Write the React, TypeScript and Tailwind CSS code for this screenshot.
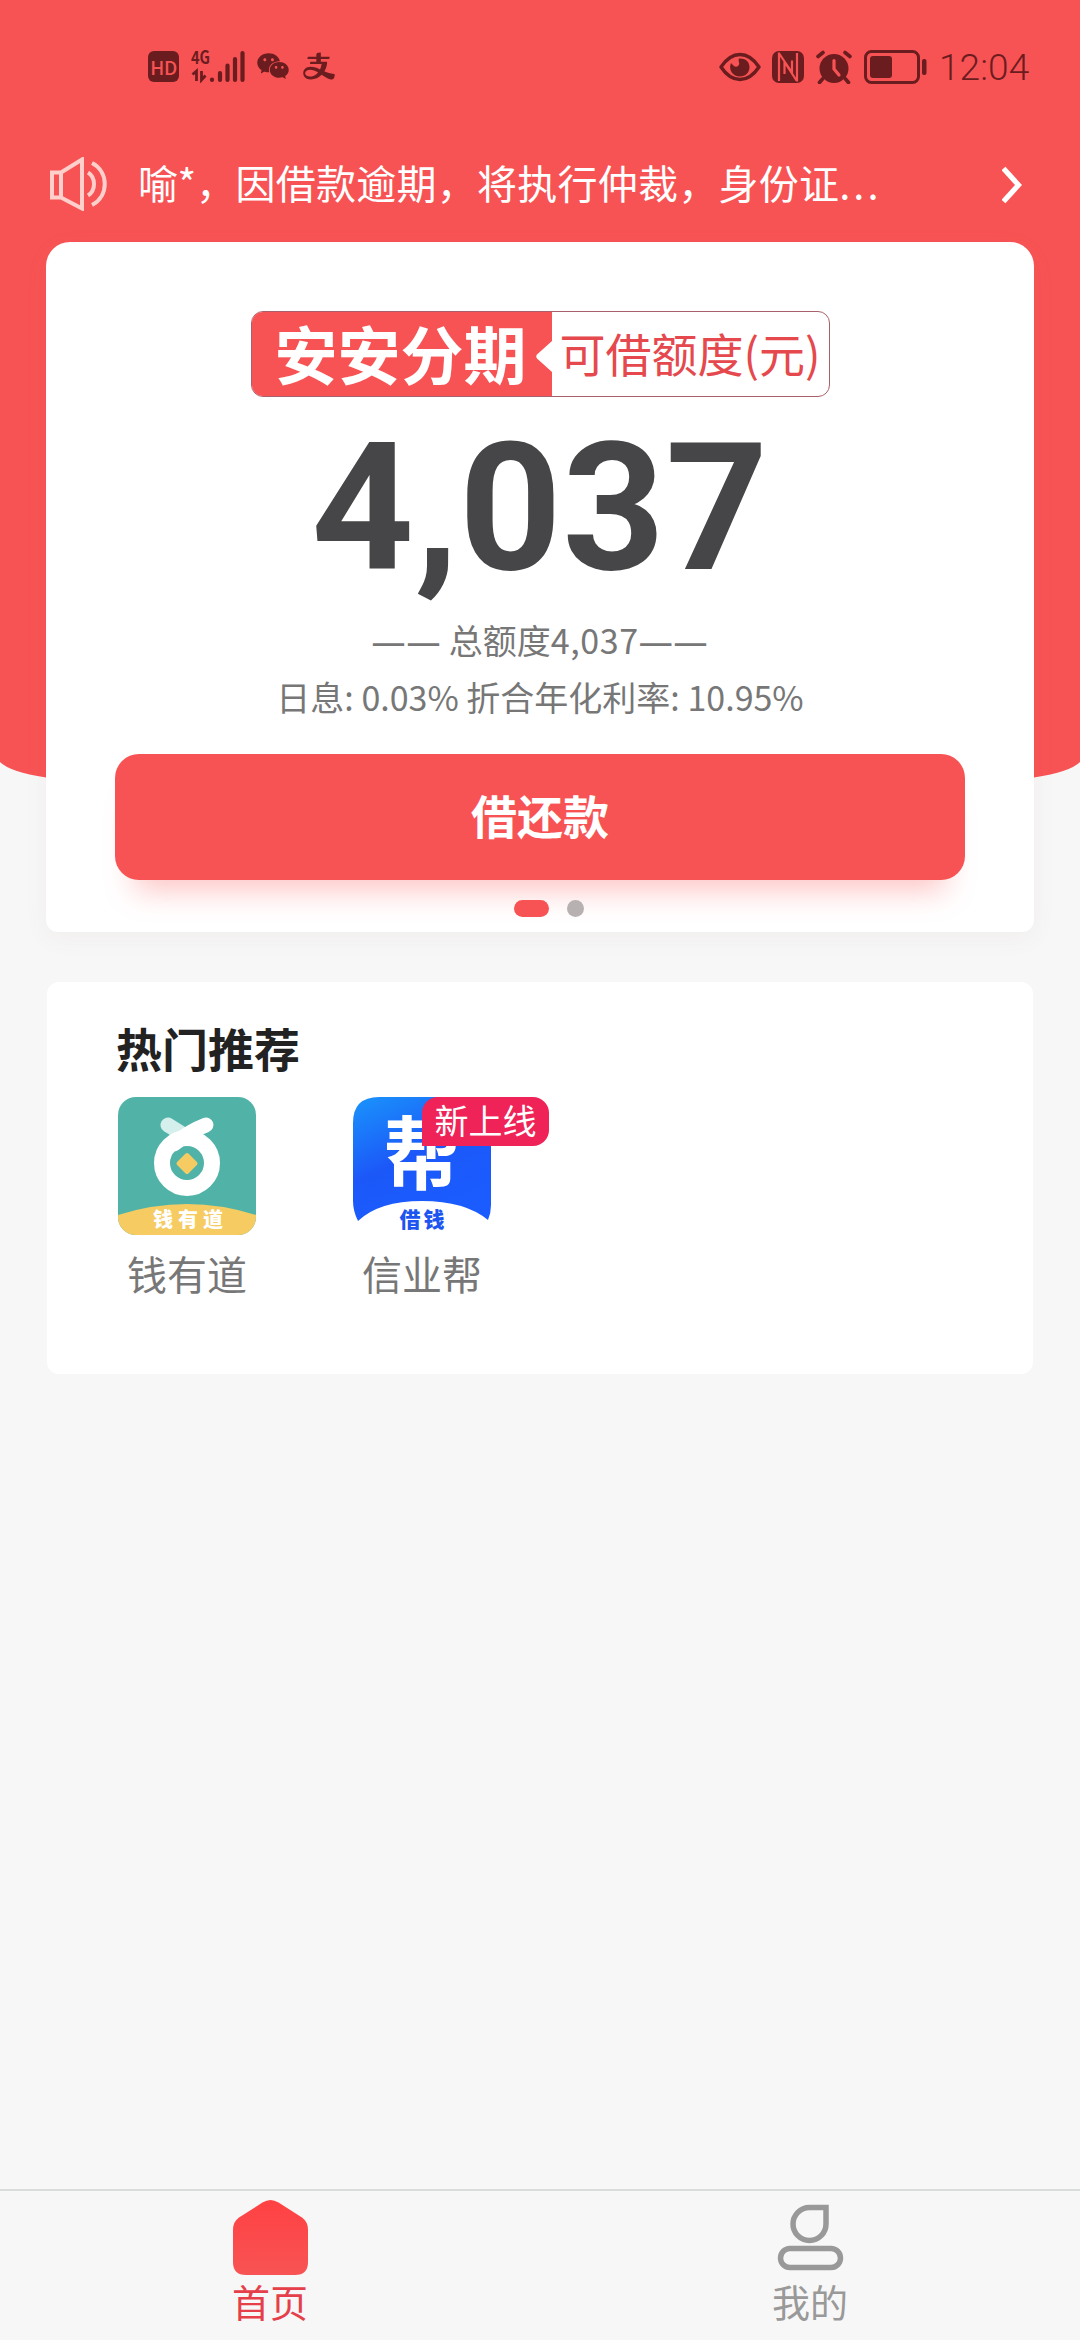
import { AiOutlineAlipay, AiFillWechat } from 'react-icons/ai';

const apps = [
    { id: 'qyd', name: '钱有道', tag: '' },
    { id: 'xyb', name: '信业帮', tag: '新上线' },
];

function StatusBar() {
    return (
        <div className="h-[134px] pr-[50px] pl-[148px] flex items-start justify-between text-[#6b1c1f]">
            <div className="flex items-center h-[134px] pb-0.5">
                <div className="w-[31px] h-[31px] rounded-md bg-[#6b1c1f] text-[#f85354] text-[19px] leading-[31px] font-medium text-center tracking-tight">HD</div>
                <svg className="ml-3 w-[54px] h-[34px]" viewBox="0 0 54 34">
                    <text x="0" y="15" fontSize="18" fontWeight="700" textLength="19" lengthAdjust="spacingAndGlyphs" fill="currentColor">4G</text>
                    <path d="M1.500 25.500l4-3.500V32M10.500 22v9l4-4.500" stroke="currentColor" strokeWidth="2.800" fill="none" />
                    <path d="M21 30.500v0.500M29 24v7M36.500 16.500v14.500M44 10v21M51.500 4v27" stroke="currentColor" strokeWidth="4.200" strokeLinecap="round" />
                </svg>
                <AiFillWechat className="ml-2.5 w-9 h-9" />
                <AiOutlineAlipay className="ml-2.5 w-9 h-9" />
            </div>
            <div className="flex items-center h-[134px]">
                <svg className="w-[42px] h-[30px]" viewBox="0 0 42 30">
                    <path d="M2 15C8 6 14 2.500 21 2.500S34 6 40 15C34 24 28 27.500 21 27.500S8 24 2 15z" fill="none" stroke="currentColor" strokeWidth="3.400" strokeLinejoin="round" />
                    <path d="M20 6.500c-1.500 3 2 4.500-1 7.500-2.500 2-5-.5-7-3-3 7 2 13.500 9 13.500 5.500 0 9.500-4 9.500-9.500S26 6 20 6.500z" fill="currentColor" />
                </svg>
                <svg className="ml-[11px] w-8 h-8" viewBox="0 0 32 32">
                    <rect width="32" height="32" rx="7" fill="currentColor" />
                    <path d="M7 1.500V30M7.500 3L20 21.500V9.500M25 30.500V2M24.500 29.500L12.500 11v12" fill="none" stroke="#f85354" strokeWidth="2.200" />
                </svg>
                <svg className="ml-3 w-[36px] h-[34px]" viewBox="0 0 36 34">
                    <circle cx="18" cy="18.500" r="14.500" fill="currentColor" />
                    <path d="M2 6.500l5-4M34 6.500l-5-4M6.500 29l-3 3.500M29.500 29l3 3.500" stroke="currentColor" strokeWidth="3.600" strokeLinecap="round" />
                    <path d="M18 10.500v8.500l5 6" fill="none" stroke="#f85354" strokeWidth="3.200" strokeLinecap="round" />
                </svg>
                <svg className="ml-3 w-[63px] h-[34px]" viewBox="0 0 63 34">
                    <rect x="1.500" y="1.500" width="53" height="31" rx="6" fill="none" stroke="currentColor" strokeWidth="3" />
                    <rect x="6" y="6" width="22" height="22" rx="3" fill="currentColor" />
                    <rect x="58" y="9" width="4.500" height="16" rx="2" fill="currentColor" />
                </svg>
                <span className="ml-3 w-[91px] pt-0.5 font-['Roboto'] text-[37px] leading-[40px] font-light tracking-[0.1px] whitespace-nowrap">12:04</span>
            </div>
        </div>
    );
}

function Notice() {
    return (
        <div className="h-[108px] pl-[50px] pr-[58px] pt-[13px] flex items-start text-white">
            <svg className="mt-2.5 w-[60px] h-[54px] shrink-0" viewBox="0 0 60 54" fill="none" stroke="#ffcfcc" strokeWidth="4">
                <path d="M2 15.500h9v25H2zM11 15.500L32 2.500v49L11 40.500" />
                <path d="M38 15.500c8 5 8 18 0 23M42 6c17 8.500 17 33.500 0 42" />
            </svg>
            <p className="ml-[28px] flex-1 text-[40px] leading-[70px] tracking-[0.25px] whitespace-nowrap"><span className="tracking-[-0.4px]">喻*，</span>因借款逾期，将执行仲裁，身份证<span className="tracking-[3px]">...</span></p>
            <svg className="mt-[19px] w-[20px] h-[38px] shrink-0" viewBox="0 0 20 38" fill="none" stroke="#fff" strokeWidth="5.200">
                <path d="M1.500 2.500L16.500 19 1.500 35.500" />
            </svg>
        </div>
    );
}

function QuotaCard() {
    return (
        <div className="h-[690px] mx-[46px] bg-white rounded-t-3xl rounded-b-xl pt-[69px] flex flex-col items-center shadow-[0_6px_24px_rgba(150,110,80,0.06)]">
            <div className="w-[579px] h-[86px] flex rounded-xl border border-[#a8606a]">
                <div className="relative w-[300px] rounded-l-[11px] bg-[#f85354] text-white text-[63px] leading-[79px] font-bold text-center">
                    <span className="relative -left-px">安安分期</span>
                    <svg className="absolute right-0 top-[29px] w-4 h-[31px]" viewBox="0 0 16 31">
                        <path d="M16 0v31L1 17.500q-1.500-2 0-4z" fill="#fff" />
                    </svg>
                </div>
                <div className="flex-1 text-[#e5484d] text-[46px] leading-[80px] text-center whitespace-nowrap">可借额度(元)</div>
            </div>
            <div className="mt-[35px] font-['Roboto'] text-[179px] leading-[152px] tracking-[0.5px] font-bold text-[#464648]">4,037</div>
            <p className="mt-[28px] text-[34px] leading-[56px] text-[#777] whitespace-nowrap">
                <span className="font-['Noto_Sans'] tracking-[0.8px]">——</span> 总额度<span className="tracking-[0.6px]">4,037</span><span className="font-['Noto_Sans'] tracking-[0.8px]">——</span>
            </p>
            <p className="text-[34px] leading-[56px] text-[#777] whitespace-nowrap">日息: 0.03% 折合年化利率: 10.95%</p>
            <button className="mt-[29px] w-[850px] h-[126px] pb-1.5 rounded-3xl bg-[#f85354] text-white text-[46px] font-bold shadow-[0_30px_30px_-20px_rgba(248,83,84,0.35)]">借还款</button>
            <div className="mt-5 pl-[18px] flex gap-[18px]">
                <span className="w-[35px] h-[17px] rounded-full bg-[#f85354]" />
                <span className="w-[17px] h-[17px] rounded-full bg-[#b8b1b1]" />
            </div>
        </div>
    );
}

function QydIcon() {
    return (
        <svg className="w-[138px] h-[138px] rounded-[18px]" viewBox="0 0 138 138">
            <rect width="138" height="138" fill="#51b3a8" />
            <path d="M50 28L66 38" stroke="#d5efec" strokeWidth="15" strokeLinecap="round" />
            <path d="M88 28Q72 34 56 47" fill="none" stroke="#fff" strokeWidth="15" strokeLinecap="round" />
            <circle cx="69" cy="66" r="25" fill="none" stroke="#fff" strokeWidth="16" />
            <rect x="61" y="58.500" width="16" height="16" rx="2" transform="rotate(45 69 66.500)" fill="#f5cb62" />
            <path d="M0 118Q69 96 138 118v20H0z" fill="#f5cb62" />
            <text x="70" y="130" fontSize="20" fontWeight="900" fill="#fff" textAnchor="middle" textLength="70">钱有道</text>
        </svg>
    );
}

function XybIcon() {
    return (
        <svg className="w-[138px] h-[138px]" viewBox="0 0 138 138">
            <defs>
                <linearGradient id="xyb" x1="0" y1="0" x2="0.500" y2="1">
                    <stop offset="0" stopColor="#1a94fb" />
                    <stop offset="0.550" stopColor="#1c58f8" />
                    <stop offset="1" stopColor="#1a5cff" />
                </linearGradient>
            </defs>
            <path d="M26 0h86q26 0 26 26v82q0 8-3 15Q112 104 69 104T5 124Q0 114 0 104V26Q0 0 26 0z" fill="url(#xyb)" />
            <text x="0" y="0" transform="translate(31 86) scale(1.090 1.160)" fontSize="69" fontWeight="700" fill="#fff">帮</text>
            <text x="69" y="130" fontSize="21" fontWeight="900" fill="#1d55f0" textAnchor="middle" textLength="45">借钱</text>
        </svg>
    );
}

function HotCard() {
    return (
        <div className="mt-[50px] h-[392px] mx-[47px] bg-white rounded-xl pt-[34px] pl-[71px]">
            <h2 className="-ml-0.5 text-[46px] leading-[62px] font-bold text-[#222]">热门推荐</h2>
            <div className="mt-[19px] flex gap-[97px]">
                {apps.map(app => (
                    <div key={app.id} className="relative w-[138px] flex flex-col items-center">
                        {app.id === 'qyd' ? <QydIcon /> : <XybIcon />}
                        {app.tag && (
                            <span className="absolute left-[69px] top-0 w-[127px] h-[49px] rounded-2xl rounded-bl-none bg-[#ef2358] text-white text-[34px] leading-[45px] text-center whitespace-nowrap">{app.tag}</span>
                        )}
                        <span className="mt-2.5 text-[40px] leading-[56px] text-[#777]">{app.name}</span>
                    </div>
                ))}
            </div>
        </div>
    );
}

function TabBar() {
    return (
        <div className="mt-auto h-[151px] border-t-2 border-[#d8dcda] flex text-[38px] leading-[50px]">
            <div className="flex-1 flex flex-col items-center text-[#e5404a]">
                <svg className="mt-[9px] w-[75px] h-[75px]" viewBox="0 0 75 75">
                    <defs>
                        <linearGradient id="home" x1="0" y1="0" x2="0" y2="1">
                            <stop offset="0" stopColor="#ff4143" />
                            <stop offset="1" stopColor="#f85354" />
                        </linearGradient>
                    </defs>
                    <path d="M29.500 2.500q8-5 16 0L69 17.500q6 4.500 6 12V62q0 13-13 13H13Q0 75 0 62V29.500q0-7.500 6-12z" fill="url(#home)" />
                </svg>
                <span className="mt-px">首页</span>
            </div>
            <div className="flex-1 flex flex-col items-center text-[#999]">
                <svg className="mt-[9px] w-[75px] h-[75px]" viewBox="0 0 75 75" fill="none" stroke="currentColor" strokeWidth="5.500">
                    <path d="M53 7.500V24A16.500 16.500 0 1 1 36.500 7.500z" />
                    <rect x="7.500" y="48.500" width="60" height="19" rx="9.500" />
                </svg>
                <span className="mt-px">我的</span>
            </div>
        </div>
    );
}

export default function App() {
    return (
        <div className="relative w-[1080px] h-[2340px] bg-[#f7f7f7] overflow-hidden font-['Noto_Sans_CJK_SC',sans-serif]">
            {/* red backdrop with curved bottom edge */}
            <div className="absolute inset-x-0 top-0">
                <div className="h-[762px] bg-[#f85354]" />
                <svg className="block w-full h-[18px]" viewBox="0 0 1080 18">
                    <path d="M0 0Q10 10 46 15.500H1034Q1070 10 1080 0z" fill="#f85354" />
                </svg>
            </div>
            <div className="relative h-full flex flex-col">
                <StatusBar />
                <Notice />
                <QuotaCard />
                <HotCard />
                <TabBar />
            </div>
        </div>
    );
}
